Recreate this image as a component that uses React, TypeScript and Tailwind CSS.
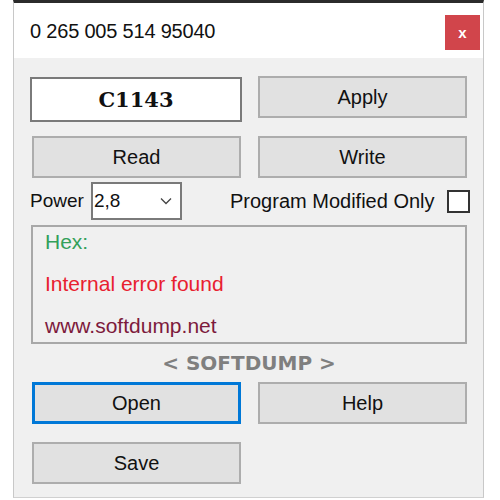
import React from "react";

const font = { fontFamily: '"Liberation Sans", Arial, sans-serif' };

function Btn({ label, w = "w-[209px]", focused = false }: { label: string; w?: string; focused?: boolean }) {
  return (
    <div
      className={`${w} h-[42px] flex items-center justify-center bg-[#e1e1e1] text-[20px] text-[#111] ${
        focused ? "border-[3px] border-[#0078d7]" : "border-2 border-[#adadad]"
      }`}
    >
      {label}
    </div>
  );
}

export default function App() {
  return (
    <div className="w-[500px] h-[500px] bg-white overflow-hidden" style={font}>
      <div className="ml-[13px] w-[471px] h-[498px] flex flex-col border-t-[3px] border-t-[#2b2b2b] border-x border-x-[#c8c8c8] border-b border-b-[#d0d0d0]">
        {/* Title bar */}
        <div className="h-[55px] bg-white flex items-start justify-between">
          <div className="pl-[16px] pt-[16px] text-[20px] leading-[24px] text-[#111] tracking-[-0.2px]">
            0 265 005 514 95040
          </div>
          <div className="mt-[12px] mr-[3px] w-[35px] h-[35px] bg-[#d1454b] flex items-center justify-center text-white font-bold text-[15px] leading-none">
            x
          </div>
        </div>
        {/* Body */}
        <div className="flex-1 bg-[#f0f0f0] flex flex-col">
          {/* Row 1 */}
          <div className="flex items-start pl-[16px] pt-[18px]">
            <div className="mt-[1px] w-[212px] h-[45px] bg-white border-2 border-[#7a7a7a] flex items-center justify-center">
              <span
                className="text-[21px] font-bold text-[#111]"
                style={{ fontFamily: '"DejaVu Serif", "Liberation Serif", serif' }}
              >
                C1143
              </span>
            </div>
            <div className="ml-[16px]">
              <Btn label="Apply" />
            </div>
          </div>
          {/* Row 2 */}
          <div className="flex pl-[18px] mt-[14px] gap-[17px]">
            <Btn label="Read" />
            <Btn label="Write" />
          </div>
          {/* Row 3 */}
          <div className="flex items-center pl-[16px] mt-[4px] h-[38px]">
            <span className="text-[19px] text-[#111] w-[61px]">Power</span>
            <div className="w-[91px] h-[38px] bg-white border-2 border-[#7a7a7a] flex items-center justify-between pl-[1px] pr-[8px]">
              <span className="text-[19px] text-[#111]">2,8</span>
              <svg width="12" height="8" viewBox="0 0 12 8" fill="none" stroke="#444" strokeWidth="1.3">
                <path d="M1 1.5 L6 6.5 L11 1.5" />
              </svg>
            </div>
            <span className="ml-[48px] text-[20px] text-[#111]">Program Modified Only</span>
            <div className="ml-[12px] w-[23px] h-[23px] bg-white border-2 border-[#333]" />
          </div>
          {/* Text box */}
          <div className="ml-[17px] mt-[5px] w-[436px] h-[119px] border-2 border-[#a8a8a8] flex flex-col gap-[16px] pl-[12px] pt-[2px] text-[21px]">
            <div className="h-[26px] leading-[26px] text-[#33a05a]">Hex:</div>
            <div className="h-[26px] leading-[26px] text-[#e8202f]">Internal error found</div>
            <div className="h-[26px] leading-[26px] text-[#7d1a3c]">www.softdump.net</div>
          </div>
          {/* SOFTDUMP */}
          <div className="ml-[17px] w-[436px] h-[38px] flex items-center justify-center">
            <span
              className="text-[20px] font-bold text-[#7f7f7f]"
              style={{ fontFamily: '"DejaVu Sans", Verdana, sans-serif' }}
            >
              &lt; SOFTDUMP &gt;
            </span>
          </div>
          {/* Row 5 */}
          <div className="flex pl-[18px] gap-[17px]">
            <Btn label="Open" focused />
            <Btn label="Help" />
          </div>
          {/* Row 6 */}
          <div className="flex pl-[18px] mt-[18px]">
            <Btn label="Save" />
          </div>
        </div>
      </div>
    </div>
  );
}
